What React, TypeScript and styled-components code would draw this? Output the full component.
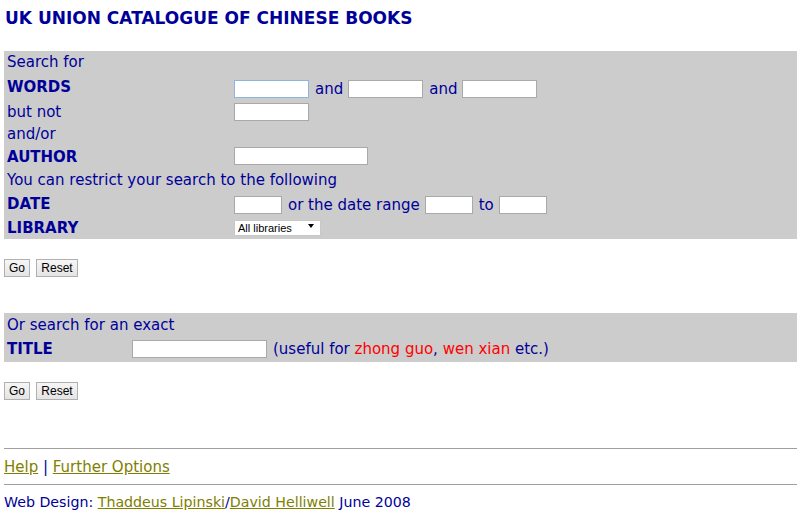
import React from "react";
import styled, { createGlobalStyle } from "styled-components";

const Global = createGlobalStyle`
  html, body { margin: 0; padding: 0; background: #ffffff; }
  body { font-family: "DejaVu Sans", Verdana, sans-serif; font-size: 15px; color: #000099; }
`;

const Page = styled.div`
  padding: 0 3px 0 4px;
`;

const Title = styled.h1`
  margin: 0;
  padding: 8px 0 0 1px;
  height: 51px;
  box-sizing: border-box;
  font-size: 17px;
  font-weight: bold;
  color: #000099;
`;

const Panel = styled.div`
  background: #cccccc;
  padding: 0 3px;
`;

const Row = styled.div<{ $h: number; $label?: number }>`
  display: grid;
  grid-template-columns: ${(p) => (p.$label ?? 227)}px 1fr;
  align-items: center;
  height: ${(p) => p.$h}px;
  white-space: nowrap;
`;

const Label = styled.div<{ $bold?: boolean }>`
  font-weight: ${(p) => (p.$bold ? "bold" : "normal")};
`;

const Cell = styled.div<{ $dy?: number }>`
  display: flex;
  align-items: center;
  margin-top: ${(p) => p.$dy ?? 0}px;
`;

const Text = styled.span<{ $red?: boolean }>`
  color: ${(p) => (p.$red ? "#ff0000" : "#000099")};
`;

const Between = styled.span`
  color: #000099;
  margin: 0 5px 0 6px;
`;

const Note = styled.span`
  color: #000099;
  margin-left: 6px;
`;

const Input = styled.input<{ $w: number; $focus?: boolean }>`
  box-sizing: border-box;
  width: ${(p) => p.$w}px;
  height: 18px;
  margin: 0;
  padding: 1px 2px;
  border: 1px solid ${(p) => (p.$focus ? "#8fb4e0" : "#a9a9a9")};
  background: #ffffff;
  font-size: 12px;
  outline: none;
`;

const SelectWrap = styled.div`
  position: relative;
  width: 87px;
  height: 16px;
`;

const Select = styled.select`
  appearance: none;
  -webkit-appearance: none;
  box-sizing: border-box;
  width: 87px;
  height: 16px;
  margin: 0;
  padding: 0 0 0 3px;
  border: 1px solid #c8c8c8;
  background: #ffffff;
  font-family: "Liberation Sans", Arial, sans-serif;
  font-size: 11px;
  line-height: 14px;
  color: #000000;
  outline: none;
`;

const Arrow = styled.span`
  position: absolute;
  right: 7px;
  top: 6px;
  width: 0;
  height: 0;
  border-left: 3px solid transparent;
  border-right: 3px solid transparent;
  border-top: 4px solid #000000;
  pointer-events: none;
`;

const Buttons = styled.div<{ $top: number; $bottom: number }>`
  display: flex;
  gap: 6px;
  margin: ${(p) => p.$top}px 0 ${(p) => p.$bottom}px 0;
`;

const Button = styled.button<{ $w: number }>`
  box-sizing: border-box;
  width: ${(p) => p.$w}px;
  height: 18px;
  margin: 0;
  padding: 0;
  border: 1px solid #b0b0b0;
  border-radius: 0;
  background: linear-gradient(#f6f6f6, #e4e4e4);
  font-family: "Liberation Sans", Arial, sans-serif;
  font-size: 12px;
  color: #000000;
`;

const Rule = styled.hr`
  margin: 0;
  border: 0;
  border-top: 1px solid #a0a0a0;
  height: 0;
`;

const FooterLine = styled.div<{ $h: number; $size?: number }>`
  height: ${(p) => p.$h}px;
  display: flex;
  align-items: center;
  white-space: pre;
  font-size: ${(p) => p.$size ?? 15}px;
`;

const Link = styled.a`
  color: #808000;
  text-decoration: underline;
`;

export default function App() {
  return (
    <>
      <Global />
      <Page>
        <Title>UK UNION CATALOGUE OF CHINESE BOOKS</Title>
        <Panel>
          <Row $h={22}>
            <Label>Search for</Label>
          </Row>
          <Row $h={27}>
            <Label $bold>WORDS</Label>
            <Cell $dy={4}>
              <Input $w={75} $focus />
              <Between>and</Between>
              <Input $w={75} />
              <Between>and</Between>
              <Input $w={75} />
            </Cell>
          </Row>
          <Row $h={23}>
            <Label>but not</Label>
            <Cell>
              <Input $w={75} />
            </Cell>
          </Row>
          <Row $h={22}>
            <Label>and/or</Label>
          </Row>
          <Row $h={23}>
            <Label $bold>AUTHOR</Label>
            <Cell $dy={-2}>
              <Input $w={134} />
            </Cell>
          </Row>
          <Row $h={23}>
            <Label>You can restrict your search to the following</Label>
          </Row>
          <Row $h={26}>
            <Label $bold>DATE</Label>
            <Cell $dy={2}>
              <Input $w={48} />
              <Between>or the date range</Between>
              <Input $w={48} />
              <Between>to</Between>
              <Input $w={48} />
            </Cell>
          </Row>
          <Row $h={22}>
            <Label $bold>LIBRARY</Label>
            <Cell $dy={-4}>
              <SelectWrap>
                <Select defaultValue="all">
                  <option value="all">All libraries</option>
                </Select>
                <Arrow />
              </SelectWrap>
            </Cell>
          </Row>
        </Panel>
        <Buttons $top={20} $bottom={36}>
          <Button $w={26}>Go</Button>
          <Button $w={42}>Reset</Button>
        </Buttons>
        <Panel>
          <Row $h={23} $label={125}>
            <Label>Or search for an exact</Label>
          </Row>
          <Row $h={26} $label={125}>
            <Label $bold>TITLE</Label>
            <Cell>
              <Input $w={135} />
              <Note>
                (useful for <Text $red>zhong guo</Text>, <Text $red>wen xian</Text> etc.)
              </Note>
            </Cell>
          </Row>
        </Panel>
        <Buttons $top={20} $bottom={48}>
          <Button $w={26}>Go</Button>
          <Button $w={42}>Reset</Button>
        </Buttons>
        <Rule />
        <FooterLine $h={35}>
          <Link href="#">Help</Link>
          <Text> | </Text>
          <Link href="#">Further Options</Link>
        </FooterLine>
        <Rule />
        <FooterLine $h={33} $size={14.2}>
          <Text>Web Design: </Text>
          <Link href="#">Thaddeus Lipinski</Link>
          <Text>/</Text>
          <Link href="#">David Helliwell</Link>
          <Text> June 2008</Text>
        </FooterLine>
      </Page>
    </>
  );
}
